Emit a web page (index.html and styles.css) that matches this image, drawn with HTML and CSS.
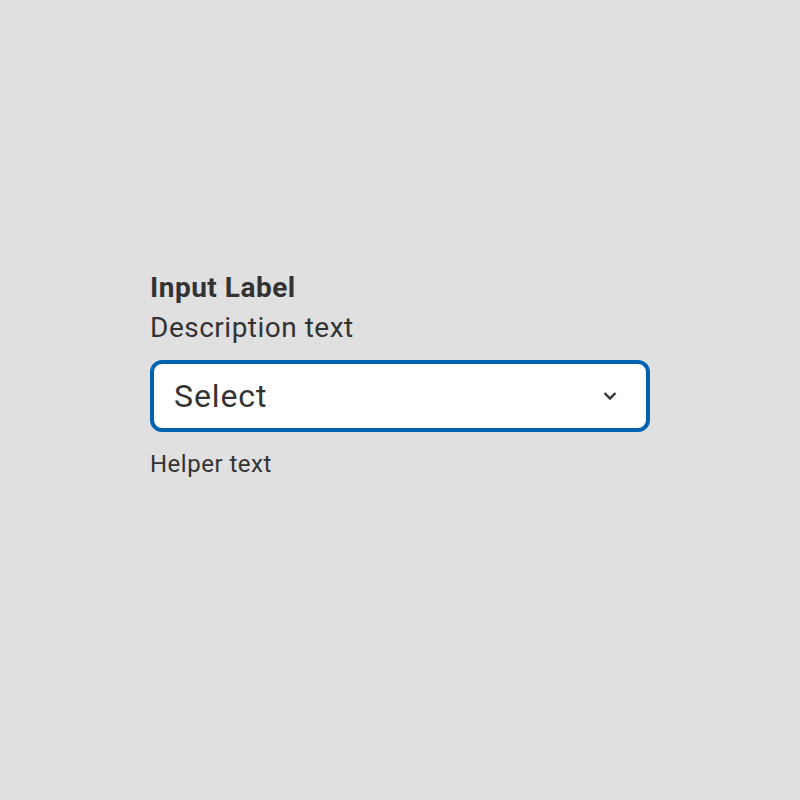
FILE: index.html
```html
<!DOCTYPE html>
<html lang="en">
<head>
    <meta charset="UTF-8">
    <meta name="viewport" content="width=device-width, initial-scale=1.0">
    <title>Select</title>
    <link rel="stylesheet" href="styles.css">
</head>
<body>
    <div class="field">
        <label class="field-label" for="choice">Input Label</label>
        <div class="field-description">Description text</div>

        <div class="select-box">
            <span class="select-value">Select</span>
            <svg class="chevron" width="16" height="16" viewBox="0 0 16 16" aria-hidden="true">
                <path d="M2.5 5 L8 10.5 L13.5 5" fill="none" stroke="#333333" stroke-width="2.4"/>
            </svg>
        </div>

        <div class="field-helper">Helper text</div>
    </div>
</body>
</html>
```

FILE: styles.css
```css
body {
    font-family: Roboto, 'Liberation Sans', sans-serif;
    margin: 0;
    background-color: #e0e0e0;
    color: #333333;
}

.field {
    width: 500px;
    margin-left: 150px;
    padding-top: 268px;
    display: flex;
    flex-direction: column;
    letter-spacing: 0.5px;
}

.field-label {
    font-size: 28px;
    font-weight: 700;
    line-height: 40px;
}

.field-description {
    font-size: 28px;
    line-height: 40px;
    margin-bottom: 12px;
}

/* caixa do select */
.select-box {
    height: 72px;
    box-sizing: border-box;
    border: 4px solid #0063b1;
    border-radius: 12px;
    background: #ffffff;
    display: flex;
    align-items: center;
    justify-content: space-between;
    padding: 0 28px 0 20px;
}

.select-value {
    font-size: 32px;
    letter-spacing: 0.9px;
}

.chevron {
    display: block;
}

.field-helper {
    font-size: 24px;
    line-height: 32px;
    margin-top: 16px;
}
```
